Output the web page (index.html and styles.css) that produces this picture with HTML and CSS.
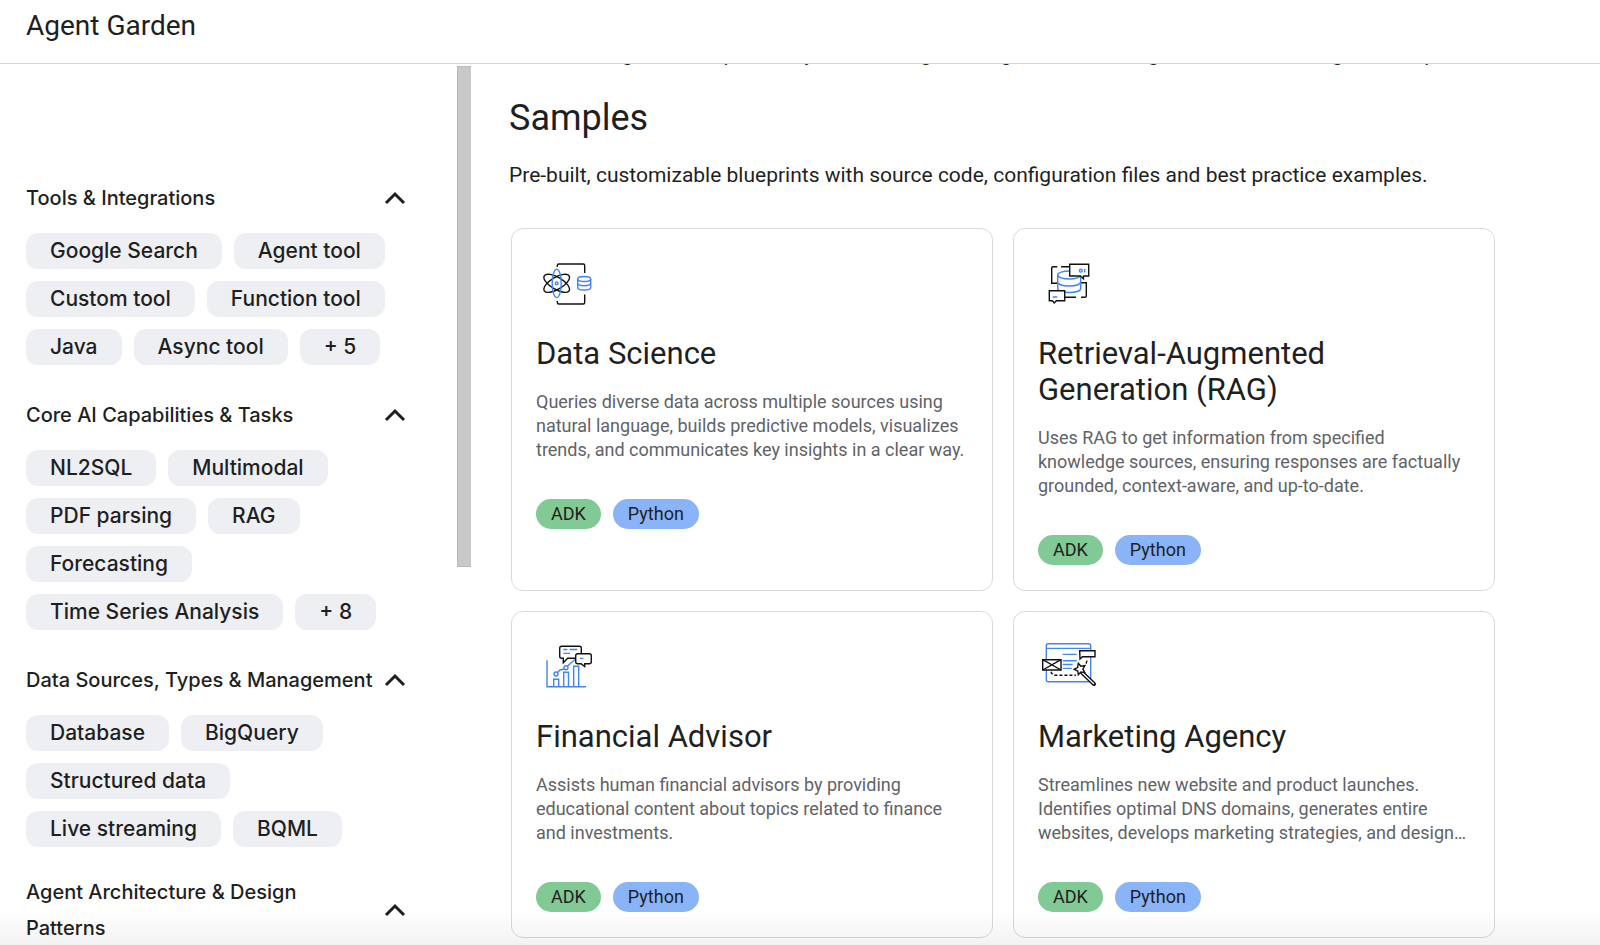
FILE: index.html
```html
<!DOCTYPE html>
<html lang="en">
<head>
  <meta charset="UTF-8">
  <meta name="viewport" content="width=device-width, initial-scale=1.0">
  <title>Agent Garden</title>
  <link rel="stylesheet" href="styles.css">
</head>
<body>

  <header class="topbar">
    <h1>Agent Garden</h1>
  </header>

  <div class="layout">

    <!-- Filters -->
    <aside class="sidebar">
      <section class="filter">
        <button class="filter-head" type="button" aria-expanded="true">
          <span>Tools &amp; Integrations</span>
          <svg class="chevron" viewBox="0 0 22 14"><path d="M2 12 11 3l9 9"/></svg>
        </button>
        <div class="chips">
          <button class="chip" type="button">Google Search</button>
          <button class="chip" type="button">Agent tool</button>
          <button class="chip" type="button">Custom tool</button>
          <button class="chip" type="button">Function tool</button>
          <button class="chip" type="button">Java</button>
          <button class="chip" type="button">Async tool</button>
          <button class="chip" type="button">+ 5</button>
        </div>
      </section>

      <section class="filter">
        <button class="filter-head" type="button" aria-expanded="true">
          <span>Core AI Capabilities &amp; Tasks</span>
          <svg class="chevron" viewBox="0 0 22 14"><path d="M2 12 11 3l9 9"/></svg>
        </button>
        <div class="chips">
          <button class="chip" type="button">NL2SQL</button>
          <button class="chip" type="button">Multimodal</button>
          <button class="chip" type="button">PDF parsing</button>
          <button class="chip" type="button">RAG</button>
          <button class="chip" type="button">Forecasting</button>
          <button class="chip" type="button">Time Series Analysis</button>
          <button class="chip" type="button">+ 8</button>
        </div>
      </section>

      <section class="filter">
        <button class="filter-head" type="button" aria-expanded="true">
          <span>Data Sources, Types &amp; Management</span>
          <svg class="chevron" viewBox="0 0 22 14"><path d="M2 12 11 3l9 9"/></svg>
        </button>
        <div class="chips">
          <button class="chip" type="button">Database</button>
          <button class="chip" type="button">BigQuery</button>
          <button class="chip" type="button">Structured data</button>
          <button class="chip" type="button">Live streaming</button>
          <button class="chip" type="button">BQML</button>
        </div>
      </section>

      <section class="filter">
        <button class="filter-head" type="button" aria-expanded="true">
          <span>Agent Architecture &amp; Design Patterns</span>
          <svg class="chevron" viewBox="0 0 22 14"><path d="M2 12 11 3l9 9"/></svg>
        </button>
      </section>
    </aside>

    <div class="scroll-track"><div class="scroll-thumb"></div></div>

    <main class="content">
      <!-- last line of the intro, scrolled under the top bar -->
      <div class="intro">
        <p>Start building to develop security with leading learning solutions using tools and modeling of examples</p>
      </div>

      <h2>Samples</h2>
      <p class="lead">Pre-built, customizable blueprints with source code, configuration files and best practice examples.</p>

      <div class="cards">
        <article class="card">
          <svg class="card-icon" viewBox="0 0 60 60">
            <path d="M21.3 13v-1.5q0-1.5 1.5-1.5h24.4q1.5 0 1.5 1.5V19M48.7 40.5v8q0 1.5-1.5 1.5H22.8q-1.5 0-1.5-1.5V47"/>
            <ellipse cx="20.7" cy="29.3" rx="14.5" ry="6" transform="rotate(31 20.7 29.3)"/>
            <ellipse cx="20.7" cy="29.3" rx="14.5" ry="6" transform="rotate(-31 20.7 29.3)"/>
            <g class="blue">
              <ellipse cx="20.7" cy="29.3" rx="4.5" ry="14.2"/>
              <circle cx="20.7" cy="29.3" r="1.4"/>
              <ellipse cx="48.2" cy="25" rx="6.5" ry="2.5"/>
              <path d="M41.7 25v8.5c0 3.4 13 3.4 13 0V25M41.7 29c0 3.6 13 3.6 13 0"/>
            </g>
          </svg>
          <h3>Data Science</h3>
          <p>Queries diverse data across multiple sources using natural language, builds predictive models, visualizes trends, and communicates key insights in a clear way.</p>
          <div class="tags"><span class="tag green">ADK</span><span class="tag sky">Python</span></div>
        </article>

        <article class="card">
          <svg class="card-icon" viewBox="0 0 60 60">
            <path d="M19.5 29.3h-5.8V14q0-1.3 1.3-1.3h4.3M23 12.7h9M42.7 28.7h5.6V42q0 1.3-1.3 1.3h-4M38 43.3H27"/>
            <g class="blue">
              <ellipse cx="31.2" cy="21" rx="11.5" ry="4"/>
              <path d="M19.7 21v13.5c0 5.3 23 5.3 23 0V21M19.7 28c0 5.3 23 5.3 23 0"/>
            </g>
            <path class="solid" d="M31.7 10.3h19V22h-5.2v2.7L42.4 22H31.7zM11.3 36.7h15.4v10h-8.4l-2 2.2-2-2.2h-3z"/>
            <path class="blue" d="M46.7 15v3.4M14.7 43h4.6"/>
            <circle class="blue" cx="42.8" cy="16.7" r="1.4"/>
          </svg>
          <h3>Retrieval-Augmented Generation (RAG)</h3>
          <p>Uses RAG to get information from specified knowledge sources, ensuring responses are factually grounded, context-aware, and up-to-date.</p>
          <div class="tags"><span class="tag green">ADK</span><span class="tag sky">Python</span></div>
        </article>

        <article class="card">
          <svg class="card-icon" viewBox="0 0 60 60">
            <g class="blue">
              <path d="M11 23.3v26.4h39M17.7 49.7v-7.4h5v7.4M27.7 49.7V35.3h4.8v14.4M37.7 49.7V29.3h5v20.4"/>
              <circle cx="20" cy="37" r="2"/>
              <circle cx="30" cy="30.7" r="2"/>
              <path d="M21.5 35.5 24 33l4.2-1M31.5 29l7.5-6.5"/>
            </g>
            <path class="solid" d="M25.7 9.3h17.6q2 0 2 2v8q0 2-2 2H31.6l-4.3 4.4v-4.4h-1.6q-2 0-2-2v-8q0-2 2-2z"/>
            <path class="solid" d="M41.7 16.7h11.6q2 0 2 2v6q0 2-2 2h-4.6v2.8l-3.6-2.8h-3.4q-2 0-2-2v-6q0-2 2-2z"/>
            <path class="blue" d="M27.3 12.5h4M33.7 12.5h7.6M27.3 16.4H34M44 21.4h3.4"/>
          </svg>
          <h3>Financial Advisor</h3>
          <p>Assists human financial advisors by providing educational content about topics related to finance and investments.</p>
          <div class="tags"><span class="tag green">ADK</span><span class="tag sky">Python</span></div>
        </article>

        <article class="card">
          <svg class="card-icon" viewBox="0 0 60 60">
            <g class="blue">
              <rect x="8.3" y="6.7" width="44.4" height="38" rx="2"/>
              <path d="M8.3 11.4h44.4M24.7 17.4h14M24.7 23.7h14M24.7 27.5h10M24.7 31.4h9"/>
            </g>
            <path class="solid" d="M4.7 22.7H23V33H4.7zM41.7 13.7H57v6H44.5L42 22z"/>
            <path d="M4.7 22.7 23 33M4.7 33 23 22.7"/>
            <path stroke-dasharray="3 2" d="M13 34.7q1 3.6 5 3.6h20M48.9 23.7q-.6 3.6-3.4 6"/>
            <path class="wand" d="m44 35.5 12 11.5"/>
            <path class="wand-core" d="m44 35.5 12 11.5"/>
            <path class="solid" d="m40.3 26.3 2.6 3 3.9-.6-1.9 3.5 1.9 3.4-3.9-.7-2.6 2.9-.6-3.8-3.600-1.700 3.500-1.800z"/>
          </svg>
          <h3>Marketing Agency</h3>
          <p>Streamlines new website and product launches. Identifies optimal DNS domains, generates entire websites, develops marketing strategies, and design…</p>
          <div class="tags"><span class="tag green">ADK</span><span class="tag sky">Python</span></div>
        </article>
      </div>
    </main>
  </div>

  <div class="bottom-fade"></div>

</body>
</html>
```
FILE: styles.css
```css
* { margin: 0; padding: 0; box-sizing: border-box; }

body {
  display: flex;
  flex-direction: column;
  height: 100vh;
  overflow: hidden;
  background: #fff;
  color: #1f1f1f;
  font-family: Roboto, sans-serif;
}

button {
  border: none;
  background: none;
  color: inherit;
  font-family: Inter, sans-serif;
  cursor: pointer;
}

.topbar {
  flex: none;
  padding: 8px 26px 19px;
  border-bottom: 1px solid #d6d6d6;
}
.topbar h1 {
  font-size: 28px;
  font-weight: 400;
  line-height: 36px;
}

.layout {
  display: flex;
  flex: 1;
  min-height: 0;
}

/* Sidebar */
.sidebar {
  flex: none;
  width: 457px;
  padding: 111px 51px 0 26px;
  overflow: hidden;
}
.filter { margin-bottom: 27px; }
.filter-head {
  display: flex;
  align-items: center;
  justify-content: space-between;
  gap: 6px;
  width: 100%;
  min-height: 46px;
  margin-bottom: 12px;
  font-size: 20px;
  font-weight: 500;
  line-height: 36px;
  text-align: left;
}
.chevron {
  flex: none;
  width: 22px;
  height: 14px;
  fill: none;
  stroke: #1f1f1f;
  stroke-width: 3;
}
.chips {
  display: flex;
  flex-wrap: wrap;
  gap: 12px;
}
.chip {
  height: 36px;
  padding: 0 24px;
  border-radius: 12px;
  background: #edeff3;
  font-size: 21px;
  font-weight: 500;
  line-height: 36px;
}

.scroll-track {
  flex: none;
  width: 14px;
  padding-top: 2px;
}
.scroll-thumb {
  height: 57%;
  border: 1px solid #b9b9b9;
  border-width: 1px 0 1px 1px;
  background: #c9c9c9;
}

/* Samples */
.content {
  flex: 1;
  min-width: 0;
  padding: 0 38px;
  overflow: hidden;
}
.intro {
  display: flex;
  align-items: flex-end;
  height: 4px;
  margin-bottom: 28px;
  overflow: hidden;
  font-size: 21px;
  line-height: 28px;
  white-space: nowrap;
}
.content h2 {
  margin-bottom: 21px;
  font-size: 36px;
  font-weight: 400;
  line-height: 44px;
}
.lead {
  margin-bottom: 39px;
  font-size: 21px;
  line-height: 28px;
}

.cards {
  display: grid;
  grid-template-columns: 1fr 1fr;
  gap: 20px;
  max-width: 986px;
  padding-left: 2px;
}
.card {
  padding: 25px 24px;
  border: 1px solid #d7d9dc;
  border-radius: 12px;
}
.card-icon {
  display: block;
  width: 60px;
  height: 60px;
  margin-bottom: 22px;
  fill: none;
  stroke: #111;
  stroke-width: 1.4;
}
.card-icon .blue { stroke: #4285f4; }
.card-icon .solid { fill: #fff; }
.card-icon .wand { stroke-width: 4; stroke-linecap: round; }
.card-icon .wand-core { stroke: #fff; stroke-width: 1.2; }
.card h3 {
  margin-bottom: 18px;
  font-size: 31px;
  font-weight: 400;
  line-height: 36px;
}
.card p {
  margin-bottom: 37px;
  color: #5f6368;
  font-size: 18px;
  line-height: 24px;
}
.tags {
  display: flex;
  gap: 12px;
}
.tag {
  padding: 0 15px;
  border-radius: 15px;
  font-size: 18px;
  line-height: 30px;
}
.green { background: #81c995; }
.sky { background: #8ab4f8; }

.bottom-fade {
  position: fixed;
  right: 0;
  bottom: 0;
  left: 0;
  height: 34px;
  background: linear-gradient(rgba(0, 0, 0, 0), rgba(0, 0, 0, 0.05));
  pointer-events: none;
}
```
